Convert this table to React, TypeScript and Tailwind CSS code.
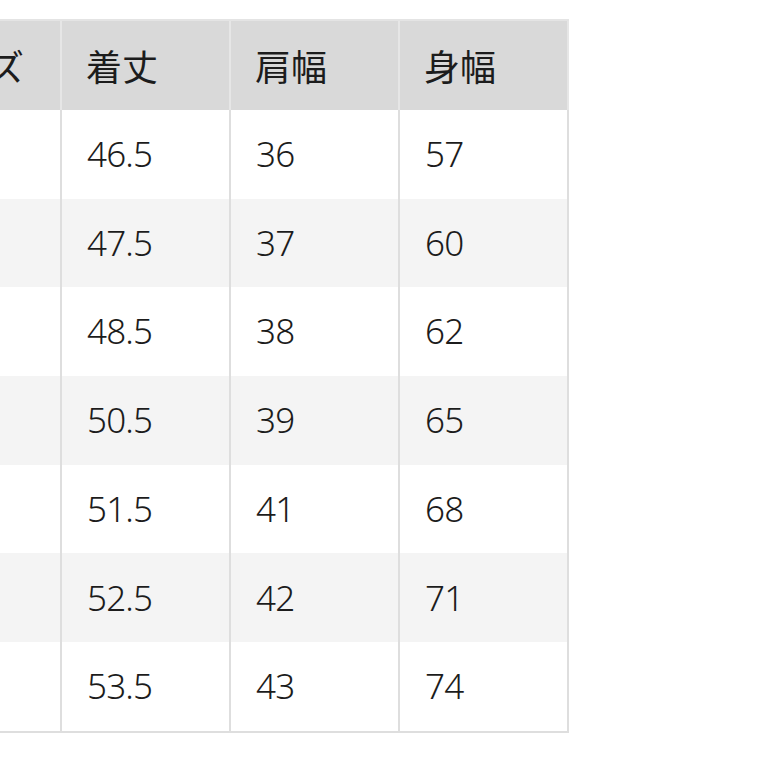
import React from 'react';

const HEADERS = ['サイズ', '着丈', '肩幅', '身幅'];

const ROWS: string[][] = [
  ['XS', '46.5', '36', '57'],
  ['S', '47.5', '37', '60'],
  ['M', '48.5', '38', '62'],
  ['L', '50.5', '39', '65'],
  ['XL', '51.5', '41', '68'],
  ['XXL', '52.5', '42', '71'],
  ['3XL', '53.5', '43', '74'],
];

const App: React.FC = () => {
  return (
    <div
      className="min-h-screen w-[777px] overflow-hidden bg-white text-[#1c1c1c]"
      style={{ fontFamily: '"Noto Sans", "Noto Sans CJK JP", sans-serif' }}
    >
      <div className="ml-[-109px] mt-[19px] w-[678px] border-l-2 border-b-2 border-[#dedede]">
        {/* Header */}
        <div className="flex h-[91px] border-t-2 border-[#e4e4e4] bg-[#d9d9d9]">
          {HEADERS.map(h => (
            <div
              key={h}
              className="flex w-[169px] items-center border-r-2 border-[#e6e6e6] pl-[24px] pb-[2px] text-[36px]"
              style={{ fontFamily: '"Noto Sans CJK JP", sans-serif' }}
            >
              {h}
            </div>
          ))}
        </div>

        {/* Rows */}
        {ROWS.map((row, i) => (
          <div
            key={row[0]}
            className={`flex h-[88.7px] ${i % 2 === 1 ? 'bg-[#f4f4f4]' : 'bg-white'}`}
          >
            {row.map((cell, j) => (
              <div
                key={j}
                className="flex w-[169px] items-center border-r-2 border-[#dedede] pl-[25px] text-[35px] font-light tracking-[-0.8px]"
              >
                {cell}
              </div>
            ))}
          </div>
        ))}
      </div>
    </div>
  );
};

export default App;
